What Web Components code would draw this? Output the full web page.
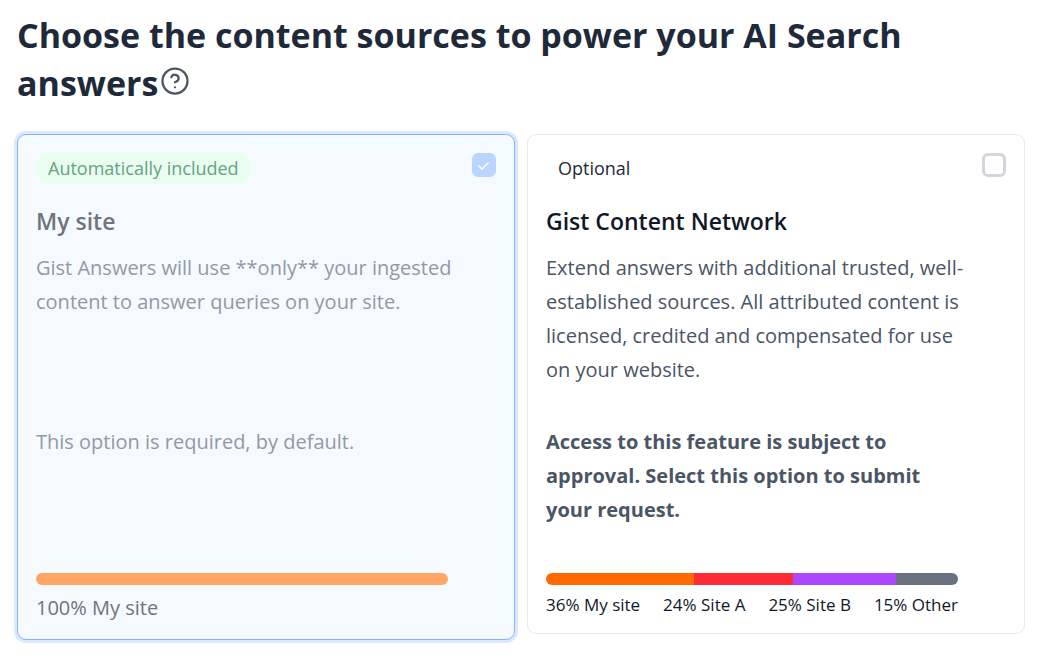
<!DOCTYPE html>
<html lang="en">
<head>
<meta charset="utf-8">
<meta name="viewport" content="width=device-width, initial-scale=1">
<title>Content sources</title>
<style>
  body { margin: 0; background: #fff; font-family: "Open Sans", "Noto Sans", sans-serif; }
</style>
</head>
<body>
<source-picker></source-picker>

<script>
const define = (name, html, setup) => {
  const template = document.createElement('template');
  template.innerHTML = html;
  customElements.define(name, class extends HTMLElement {
    connectedCallback() {
      if (this.shadowRoot) return;
      this.attachShadow({ mode: 'open' }).append(template.content.cloneNode(true));
      if (setup) setup(this, this.shadowRoot);
    }
  });
};

define('help-button', `
  <style>
    :host { display: inline-block; margin-left: 2px; vertical-align: baseline; }
    button { display: block; padding: 0; border: 0; background: none; color: #4a5565; cursor: pointer; }
    svg { display: block; width: 30px; height: 30px; }
  </style>
  <button type="button" aria-label="Help">
    <svg viewBox="0 0 24 24" fill="none" stroke="currentColor" stroke-width="1.8" stroke-linecap="round" stroke-linejoin="round" aria-hidden="true">
      <circle cx="12" cy="12" r="10"/>
      <path d="M9.09 9a3 3 0 0 1 5.83 1c0 2-3 3-3 3"/>
      <path d="M12 17h.01"/>
    </svg>
  </button>`);

define('source-badge', `
  <style>
    :host { display: inline-block; padding: 0 12px; border-radius: 15px; font-size: 18px; font-weight: 500; line-height: 30px; color: #1e2939; }
    :host([tone="green"]) { background: #e9fdf0; color: #66a382; }
  </style>
  <slot></slot>`);

define('share-bar', `
  <style>
    :host { display: flex; height: 12px; border-radius: 6px; overflow: hidden; }
    span { flex-basis: 0; }
  </style>`, (host, root) => {
  for (const part of host.getAttribute('parts').split(' ')) {
    const [share, colour] = part.split(':');
    const segment = document.createElement('span');
    segment.style.flexGrow = share;
    segment.style.background = colour;
    root.append(segment);
  }
});

define('source-card', `
  <style>
    :host {
      display: flex; gap: 24px; box-sizing: border-box; padding: 18px 18px 14px;
      border: 1px solid #e5e7eb; border-radius: 9px; background: #fff;
      --title: #101828; --text: #4a5565;
    }
    :host([included]) {
      background: #f5faff; border-color: #84b3ff; box-shadow: 0 0 0 3px #dbe9fe;
      --title: #70747e; --text: #9299a3;
    }
    .content { flex: 1; min-width: 0; }
    label { display: block; margin: 21px 0 13px; font-size: 23px; font-weight: 600; line-height: 34px; color: var(--title); }
    .text, .note { margin-right: -8px; font-size: 20px; line-height: 34px; color: var(--text); }
    .text { min-height: 4lh; margin-bottom: 38px; }
    .note { min-height: 3lh; margin-bottom: 46px; }
    .tick { display: grid; align-self: flex-start; }
    .tick > * { grid-area: 1 / 1; }
    input { appearance: none; box-sizing: border-box; width: 24px; height: 24px; margin: 0; border: 3px solid #d1d5dc; border-radius: 6px; background: #fff; }
    input:checked { border-color: #bad6ff; background: #bad6ff; }
    svg { display: none; width: 24px; height: 24px; pointer-events: none; }
    input:checked + svg { display: block; }
    .legend { display: flex; justify-content: space-between; margin-top: 6px; }
  </style>
  <div class="content">
    <slot name="badge"></slot>
    <label for="choice"><slot name="title"></slot></label>
    <div class="text"><slot name="text"></slot></div>
    <div class="note"><slot name="note"></slot></div>
    <slot name="bar"></slot>
    <div class="legend"><slot name="legend"></slot></div>
  </div>
  <div class="tick">
    <input id="choice" type="checkbox">
    <svg viewBox="0 0 24 24" fill="none" stroke="#fff" stroke-width="1.5" aria-hidden="true"><path d="M6.500 12.500l3.500 3.500 6.500-6.500"/></svg>
  </div>`, (host, root) => {
  const input = root.querySelector('input');
  input.checked = input.disabled = host.hasAttribute('included');
});

define('source-picker', `
  <style>
    :host { display: block; padding: 11px 35px 27px 17px; }
    h1 { margin: 0 0 27px; font-size: 34px; font-weight: 700; line-height: 48px; color: #1e2939; }
    .cards { display: grid; grid-template-columns: 1fr 1fr; gap: 12px; align-items: start; }
    source-badge { display: block; width: fit-content; }
    .total { font-size: 20px; line-height: 34px; color: #70747e; }
    .share { font-size: 17px; line-height: 28px; color: #101828; }
    strong { font-weight: 700; }
  </style>
  <h1>Choose the content sources to power your AI Search answers<help-button></help-button></h1>
  <div class="cards">
    <source-card included>
      <source-badge slot="badge" tone="green">Automatically included</source-badge>
      <span slot="title">My site</span>
      <span slot="text">Gist Answers will use **only** your ingested content to answer queries on your site.</span>
      <span slot="note">This option is required, by default.</span>
      <share-bar slot="bar" parts="100:#ffa566"></share-bar>
      <span slot="legend" class="total">100% My site</span>
    </source-card>
    <source-card>
      <source-badge slot="badge">Optional</source-badge>
      <span slot="title">Gist Content Network</span>
      <span slot="text">Extend answers with additional trusted, well-established sources. All attributed content is licensed, credited and compensated for use on your website.</span>
      <strong slot="note">Access to this feature is subject to approval. Select this option to submit your request.</strong>
      <share-bar slot="bar" parts="36:#ff6900 24:#fb2c36 25:#ad46ff 15:#6a7282"></share-bar>
      <span slot="legend" class="share">36% My site</span>
      <span slot="legend" class="share">24% Site A</span>
      <span slot="legend" class="share">25% Site B</span>
      <span slot="legend" class="share">15% Other</span>
    </source-card>
  </div>`);
</script>
</body>
</html>
